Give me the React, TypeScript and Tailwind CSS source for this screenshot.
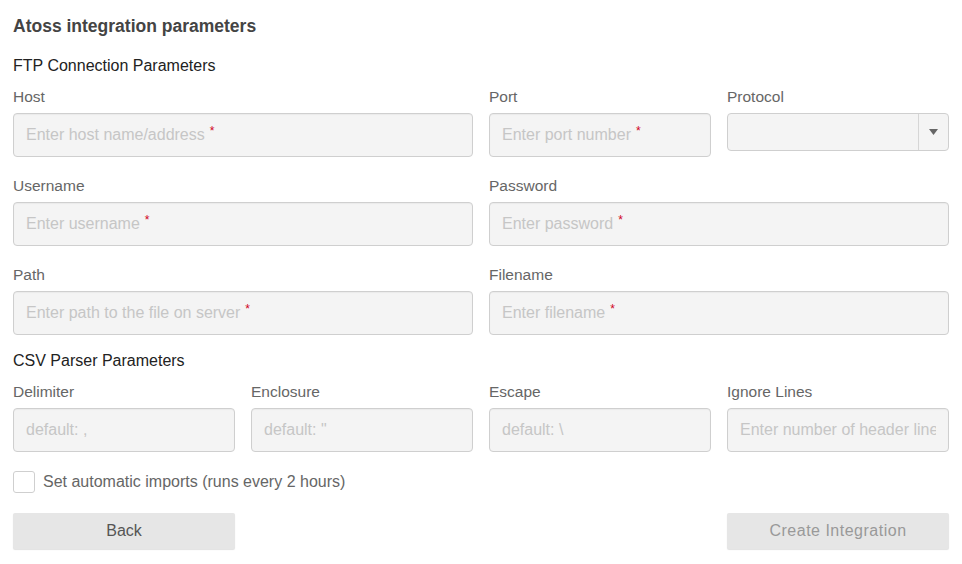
import React from 'react';

const font = { fontFamily: '"Liberation Sans", Arial, sans-serif' };

function Field({ label, placeholder, required, span }: { label: string; placeholder: string; required?: boolean; span: string }) {
  return (
    <div className={span}>
      <div className="text-[15.5px] leading-5 text-[#666] mb-[6px]">{label}</div>
      <div className="h-[44px] rounded-[4px] border border-[#cfcfcf] bg-[#f4f4f4] flex items-center px-3 shadow-[inset_0_1px_1px_rgba(0,0,0,0.04)]">
        <span className="block min-w-0 flex-1 overflow-hidden text-[16px] text-[#c6c6c6] whitespace-nowrap">
          {placeholder}
          {required && <span className="text-[#d0021b] text-[12px] align-top relative top-[-1px] ml-[5px]">*</span>}
        </span>
      </div>
    </div>
  );
}

export default function App() {
  return (
    <div style={font} className="w-[962px] h-[564px] bg-white px-[13px] pt-[16px]">
      <div className="w-[936px]">
        <h1 className="text-[17.5px] leading-5 font-bold text-[#444]">Atoss integration parameters</h1>
        <h2 className="mt-[20px] text-[16px] leading-5 text-[#222]">FTP Connection Parameters</h2>

        <div className="mt-[11px] grid grid-cols-4 gap-x-4 gap-y-[19px]">
          <Field span="col-span-2" label="Host" placeholder="Enter host name/address" required />
          <Field span="col-span-1" label="Port" placeholder="Enter port number" required />
          <div className="col-span-1">
            <div className="text-[15.5px] leading-5 text-[#666] mb-[6px]">Protocol</div>
            <div className="h-[38px] rounded-[4px] border border-[#cfcfcf] bg-[#f4f4f4] flex">
              <div className="flex-1" />
              <div className="w-[30px] border-l border-[#d6d6d6] flex items-center justify-center">
                <svg width="9" height="6" viewBox="0 0 9 6">
                  <path d="M0 0 L9 0 L4.5 6 Z" fill="#666" />
                </svg>
              </div>
            </div>
          </div>

          <Field span="col-span-2" label="Username" placeholder="Enter username" required />
          <Field span="col-span-2" label="Password" placeholder="Enter password" required />

          <Field span="col-span-2" label="Path" placeholder="Enter path to the file on server" required />
          <Field span="col-span-2" label="Filename" placeholder="Enter filename" required />
        </div>

        <h2 className="mt-[16px] text-[16px] leading-5 text-[#222]">CSV Parser Parameters</h2>

        <div className="mt-[11px] grid grid-cols-4 gap-x-4">
          <Field span="col-span-1" label="Delimiter" placeholder="default: ," />
          <Field span="col-span-1" label="Enclosure" placeholder='default: "' />
          <Field span="col-span-1" label="Escape" placeholder="default: \" />
          <Field span="col-span-1" label="Ignore Lines" placeholder="Enter number of header lines" />
        </div>

        <label className="mt-[18px] flex items-center gap-2">
          <span className="w-[22px] h-[22px] rounded-[3px] border border-[#cfcfcf] bg-white" />
          <span className="text-[16px] text-[#666]">Set automatic imports (runs every 2 hours)</span>
        </label>

        <div className="mt-[19px] grid grid-cols-4 gap-x-4">
          <button className="col-span-1 h-[36px] rounded-[2px] bg-[#e6e6e6] text-[16px] text-[#555] shadow-[0_1px_1px_rgba(0,0,0,0.12)]">Back</button>
          <div className="col-span-2" />
          <button className="col-span-1 h-[36px] rounded-[2px] bg-[#e6e6e6] text-[16px] text-[#999] tracking-[0.5px] shadow-[0_1px_1px_rgba(0,0,0,0.12)]">Create Integration</button>
        </div>
      </div>
    </div>
  );
}
